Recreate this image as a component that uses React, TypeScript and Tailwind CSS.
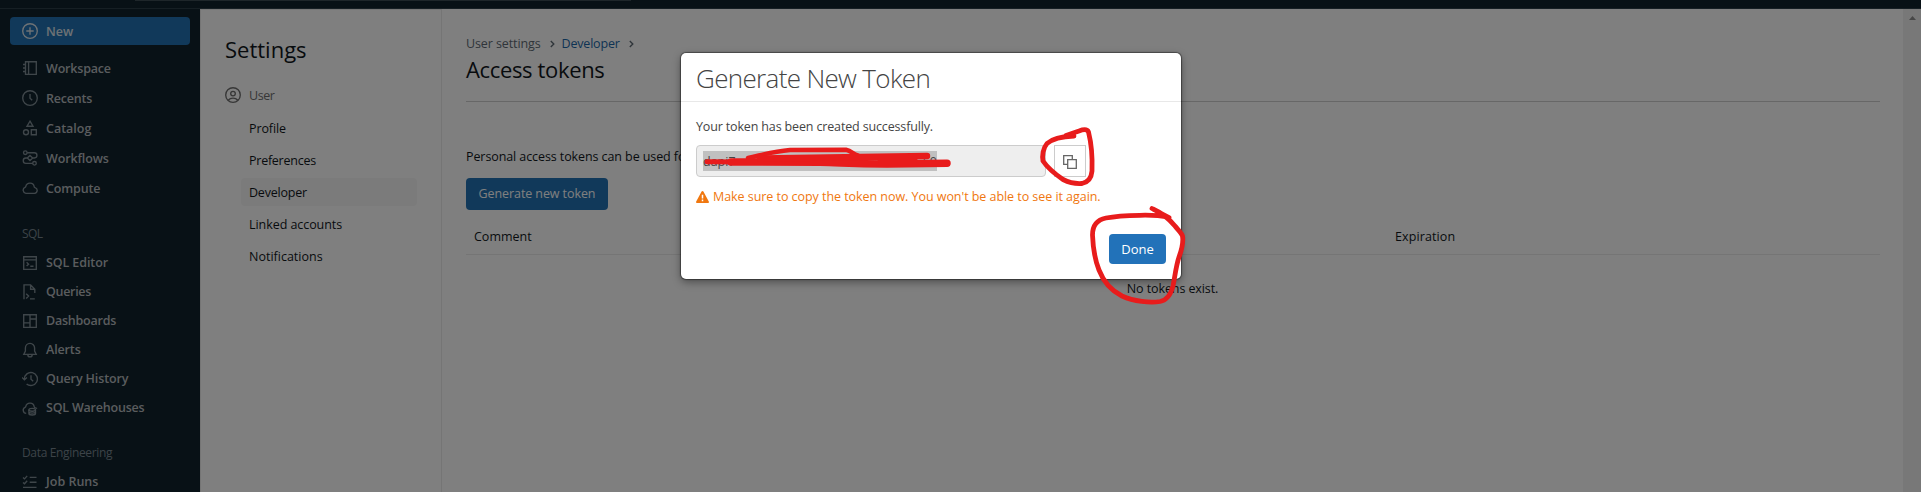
import type { ReactNode } from "react";

type NavItem = { label: string; tracking: string; icon: ReactNode };

function Icon({ children }: { children: ReactNode }) {
  return (
    <svg
      className="size-4 shrink-0"
      viewBox="0 0 16 16"
      fill="none"
      stroke="currentColor"
      strokeWidth="1.35"
    >
      {children}
    </svg>
  );
}

const mainNav: NavItem[] = [
  {
    label: "Workspace",
    tracking: "tracking-[-0.19px]",
    icon: (
      <Icon>
        <path d="M3.5 1.7h10.8v12.6H3.5zM6.6 1.7v12.6M1 4.5h2.5M1 8h2.5M1 11.5h2.5" />
      </Icon>
    ),
  },
  {
    label: "Recents",
    tracking: "tracking-[-0.2px]",
    icon: (
      <Icon>
        <circle cx="8" cy="8" r="7.3" />
        <path d="M8 4v4.3l2.2 2" />
      </Icon>
    ),
  },
  {
    label: "Catalog",
    tracking: "tracking-normal",
    icon: (
      <Icon>
        <path d="M8 1.2l3 5H5zM9.3 9.7h5v5h-5z" />
        <circle cx="4" cy="12.2" r="2.5" />
      </Icon>
    ),
  },
  {
    label: "Workflows",
    tracking: "tracking-[-0.13px]",
    icon: (
      <Icon>
        <circle cx="3.3" cy="2.7" r="1.8" />
        <circle cx="12.5" cy="13.3" r="1.8" />
        <path d="M5.1 2.7h7.2a2.6 2.6 0 010 5.3h-1.6M5.3 8H3.9a2.6 2.6 0 000 5.3h6.8M8 5.5L10.7 8 8 10.5 5.3 8z" />
      </Icon>
    ),
  },
  {
    label: "Compute",
    tracking: "tracking-[-0.15px]",
    icon: (
      <Icon>
        <path d="M3.9 13.3h8.6a2.9 2.9 0 00.5-5.7 1 1 0 01-.8-.9 4.3 4.3 0 00-8.4-.3c-.1.5-.3.8-.8 1a3.1 3.1 0 00.9 5.9z" />
      </Icon>
    ),
  },
];

const sqlNav: NavItem[] = [
  {
    label: "SQL Editor",
    tracking: "tracking-[-0.1px]",
    icon: (
      <Icon>
        <path d="M1.7 1.7h12.6v12.6H1.7zM1.7 4.8h12.6M4.6 7.3l2 1.9-2 1.9M8.3 11.2h3.2" />
      </Icon>
    ),
  },
  {
    label: "Queries",
    tracking: "tracking-[-0.3px]",
    icon: (
      <Icon>
        <path d="M2 15.2V.9h6.6l4.2 4.3V9M8.6.9v4.3h4.2M4.2 9.7l2.4 2.4-2.4 2.4M8 14.8h4.8" />
      </Icon>
    ),
  },
  {
    label: "Dashboards",
    tracking: "tracking-[-0.23px]",
    icon: (
      <Icon>
        <path d="M1.7 1.7h12.6v12.6H1.7zM8 1.7v12.6M8 6h6.3M1.7 9.8H8" />
      </Icon>
    ),
  },
  {
    label: "Alerts",
    tracking: "tracking-[-0.12px]",
    icon: (
      <Icon>
        <path d="M8 1.4a4.6 4.6 0 00-4.6 4.6v3.1L1.8 12.3h12.4l-1.6-3.2V6A4.6 4.6 0 008 1.4zM5.8 12.4a2.2 2.5 0 004.4 0" />
      </Icon>
    ),
  },
  {
    label: "Query History",
    tracking: "tracking-[-0.12px]",
    icon: (
      <Icon>
        <path d="M2.4 8.7V8a6.5 6.5 0 112.2 4.9M0 6.4l2.4 2.5 2.5-2.5M9 4.3v4l2.2 1.9" />
      </Icon>
    ),
  },
  {
    label: "SQL Warehouses",
    tracking: "tracking-[-0.2px]",
    icon: (
      <Icon>
        <path d="M4.2 13.3a3.1 3.1 0 01-1.2-5.9c.5-.2.7-.5.8-1a4.3 4.3 0 018.4.3c0 .5.3.8.8.9a2.9 2.9 0 011.9 1.1" />
        <ellipse cx="10.2" cy="9.8" rx="3.3" ry="1.4" />
        <path d="M6.9 9.8v3.7c0 .9 1.5 1.5 3.3 1.5s3.3-.6 3.3-1.5V9.8M6.9 11.8c0 .8 1.5 1.3 3.3 1.3s3.3-.5 3.3-1.3" />
      </Icon>
    ),
  },
];

const dataNav: NavItem[] = [
  {
    label: "Job Runs",
    tracking: "tracking-normal",
    icon: (
      <Icon>
        <path d="M1 3.6l1.5 1.3 2.7-3M1 8.4l1.5 1.3 2.7-3M7.7 3.4h6.8M7.7 8.2h6.8M1 13.3h13.5" />
      </Icon>
    ),
  },
];

const settingsNav = [
  { label: "Profile", tracking: "tracking-[-0.1px]", active: false },
  { label: "Preferences", tracking: "tracking-[-0.25px]", active: false },
  { label: "Developer", tracking: "tracking-[-0.2px]", active: true },
  { label: "Linked accounts", tracking: "tracking-[-0.06px]", active: false },
  { label: "Notifications", tracking: "tracking-normal", active: false },
];

function NavRow({ item, height }: { item: NavItem; height: string }) {
  return (
    <li className={`flex shrink-0 items-center gap-2 pl-[22px] ${height}`}>
      <span className="flex text-[#7f8d95]">{item.icon}</span>
      <span className={`pt-0.5 font-semibold text-[#b4b9bd] ${item.tracking}`}>{item.label}</span>
    </li>
  );
}

function Sidebar() {
  return (
    <nav className="flex w-[200px] shrink-0 flex-col overflow-hidden bg-[#10222c] pt-2">
      <button className="mx-2.5 flex h-7 shrink-0 items-center gap-2 rounded bg-[#2272b4] pl-3 text-[#dce4ea]">
        <Icon>
          <circle cx="8" cy="8" r="7.3" />
          <path d="M8 4.3v7.4M4.3 8h7.4" />
        </Icon>
        <span className="pt-0.5 font-semibold">New</span>
      </button>
      <ul className="mt-2">
        {mainNav.map((item) => (
          <NavRow key={item.label} item={item} height="h-[30px]" />
        ))}
      </ul>
      <h3 className="mt-[17px] h-7 shrink-0 pl-[22px] text-xs leading-7 tracking-[-0.6px] text-[#798790]">
        SQL
      </h3>
      <ul>
        {sqlNav.map((item) => (
          <NavRow key={item.label} item={item} height="h-[29px]" />
        ))}
      </ul>
      <h3 className="mt-[17px] h-7 shrink-0 pl-[22px] text-xs leading-7 tracking-[-0.34px] text-[#798790]">
        Data Engineering
      </h3>
      <ul>
        {dataNav.map((item) => (
          <NavRow key={item.label} item={item} height="h-[29px]" />
        ))}
      </ul>
    </nav>
  );
}

function SettingsPanel() {
  return (
    <aside className="flex w-[242px] shrink-0 flex-col border-x border-t border-[#ebebeb] pt-[23px] pl-6">
      <h1 className="text-[22px] leading-8 font-medium text-[#11171c]">Settings</h1>
      <div className="mt-[14px] flex h-8 items-center gap-2 text-[#6f6f6f]">
        <Icon>
          <circle cx="8" cy="8" r="7.3" />
          <circle cx="8" cy="6.6" r="2.3" />
          <path d="M3.2 13.3c1.3-1.6 3-2.2 4.8-2.2s3.5.6 4.8 2.2" />
        </Icon>
        <span className="pt-0.5 tracking-[-0.45px]">User</span>
      </div>
      <ul className="mr-6 ml-4 flex flex-col gap-1 pt-[3px]">
        {settingsNav.map((item) => (
          <li
            key={item.label}
            className={`h-7 rounded pl-2 leading-[30px] text-[#11171c] ${item.tracking} ${item.active ? "bg-[#f6f6f6]" : ""}`}
          >
            {item.label}
          </li>
        ))}
      </ul>
    </aside>
  );
}

function Chevron() {
  return (
    <svg className="h-2 w-[5px]" viewBox="0 0 5 8" fill="none" stroke="#5f6b75" strokeWidth="1.4">
      <path d="M.8 1l3 3-3 3" />
    </svg>
  );
}

function TokensPage() {
  return (
    <main className="flex min-w-0 flex-1 flex-col pt-[25px] pr-[23px] pl-6 text-[#11171c]">
      <div className="flex h-5 items-center gap-[9px]">
        <span className="tracking-[-0.1px] text-[#5f6b75]">User settings</span>
        <Chevron />
        <span className="-ml-0.5 tracking-[-0.2px] text-[#1b67a8]">Developer</span>
        <Chevron />
      </div>
      <h2 className="h-12 border-b border-[#cfcfcf] text-[22px] leading-[31px] font-medium tracking-[-0.35px]">
        Access tokens
      </h2>
      <p className="mt-[45px] h-5 leading-5 tracking-[-0.09px]">Personal access tokens can be used fo</p>
      <button className="mt-[11px] h-8 w-[142px] rounded bg-[#2272b4] pt-px font-medium tracking-[-0.09px] text-white">
        Generate new token
      </button>
      <div className="mt-[9px] grid h-9 grid-cols-[921px_1fr] border-b border-[#ebebeb] leading-[35px] font-medium">
        <span className="pl-2">Comment</span>
        <span className="pl-2 tracking-[0.1px]">Expiration</span>
      </div>
      <p className="mt-6 pr-px text-center leading-5 tracking-[-0.1px]">No tokens exist.</p>
    </main>
  );
}

function TokenDialog() {
  return (
    <section className="mt-[53px] mr-[59px] flex h-[226px] w-[500px] flex-col rounded-[5px] bg-white text-[#444] shadow-[0_0_1px_1px_rgba(0,0,0,0.4),0_3px_8px_rgba(0,0,0,0.4)]">
      <h2 className="h-[49px] shrink-0 border-b border-[#e8e8e8] pl-[15px] text-[26px] leading-[50px] font-light tracking-[-0.66px] text-[#444]">
        Generate New Token
      </h2>
      <p className="mt-[15px] pl-[15px] leading-5 tracking-[-0.15px]">
        Your token has been created successfully.
      </p>
      <div className="mt-2 flex gap-2 pl-[15px]">
        <div className="flex h-8 w-[350px] items-center rounded border border-[#ccc] bg-[#eee] pl-1.5">
          <span className="flex h-5 w-[234px] justify-between bg-[#c0c0c0] leading-[22px] text-[#444]">
            <span>dapi7</span>
            <span>60</span>
          </span>
        </div>
        <button className="flex size-8 items-center justify-center border border-[#ccc] pt-px">
          <svg className="size-4" viewBox="0 0 16 16" fill="none" stroke="#666" strokeWidth="1.3">
            <path d="M5.5 10.3H1.7V1.7h8.6v3.8M5.7 5.7h8.6v8.6H5.7z" />
          </svg>
        </button>
      </div>
      <p className="mt-[10px] flex h-5 items-center gap-1 pl-[15px] font-medium tracking-[-0.05px] text-[#f0770f]">
        <svg className="h-3 w-[13px]" viewBox="0 0 13 12">
          <path
            d="M6.5 0c.4 0 .7.2.9.5l5.4 10c.4.7-.1 1.5-.9 1.5H1.1c-.8 0-1.3-.8-.9-1.5l5.4-10c.2-.3.5-.5.9-.5z"
            fill="#f0770f"
          />
          <path d="M6.5 3.8v3.6M6.5 8.5v1.7" stroke="#fff" strokeWidth="1.5" />
        </svg>
        <span>Make sure to copy the token now. You won't be able to see it again.</span>
      </p>
      <button className="mt-[27px] mr-[15px] h-[30px] w-[57px] self-end rounded bg-[#2272b9] pt-0.5 text-[13px] font-medium text-white">
        Done
      </button>
    </section>
  );
}

function Annotations() {
  return (
    <svg
      className="pointer-events-none absolute inset-0 h-[492px] w-[1921px]"
      viewBox="0 0 1921 492"
      fill="none"
      stroke="#e81c1c"
      strokeLinecap="round"
      strokeLinejoin="round"
    >
      <path strokeWidth="4.5" d="M748 158C762 155 772 151.5 790 150L846 149.8C852 151 853 154.5 858 155.5" />
      <path strokeWidth="5" d="M707 161.8L745 162" />
      <path strokeWidth="7.5" d="M731 162L820 162.3C840 162.5 850 164 887 164L947 163.3" />
      <path strokeWidth="6.5" d="M760 158.5L927 156" />
      <path strokeWidth="5" d="M880 160L915 160" />
      <path
        strokeWidth="4.8"
        d="M1074 136C1062 136.5 1052 139 1047 143.5C1043 148 1042 156 1043 161C1047 167 1055 174 1063 179.5C1069 182.5 1076 184 1082 183.5C1089 182 1091.5 177 1092 171C1092.5 158 1091 142 1088.5 132C1087 128.5 1083 129.5 1079 131L1066 135.5"
      />
      <path
        strokeWidth="4.8"
        d="M1152 208.5L1169 217.5C1160 215.5 1150 215 1140 215.3C1128 215.5 1116 216 1106 218C1096 220 1092.5 226 1092.5 235C1093 248 1095 260 1099 270C1104 283 1112 291 1122 296C1134 301.5 1150 303 1160 301.5C1168 300 1171 294 1173 286C1175 276 1176 266 1179 257C1182 249 1183.5 242 1182.5 236C1181.5 233 1178 230 1175 226C1170 220 1162 213 1153 209"
      />
    </svg>
  );
}

export default function App() {
  return (
    <div className="relative flex h-[492px] w-[1921px] flex-col overflow-hidden bg-white font-['Open_Sans',sans-serif] text-[12.5px]">
      <header className="h-[9px] shrink-0 border-b border-[#2c3e48] bg-[#10222c]">
        <div className="ml-[135px] h-px w-[496px] bg-[#3c4c55]" />
      </header>
      <div className="flex min-h-0 flex-1">
        <Sidebar />
        <SettingsPanel />
        <TokensPage />
        <div className="flex w-[18px] shrink-0 justify-center bg-[#f1f1f1] pt-[7px]">
          <svg className="h-1 w-[7px]" viewBox="0 0 7 4">
            <path d="M3.5 0L7 4H0z" fill="#8f8f8f" />
          </svg>
        </div>
      </div>
      <div className="absolute inset-0 flex justify-center bg-black/50">
        <TokenDialog />
      </div>
      <Annotations />
    </div>
  );
}
